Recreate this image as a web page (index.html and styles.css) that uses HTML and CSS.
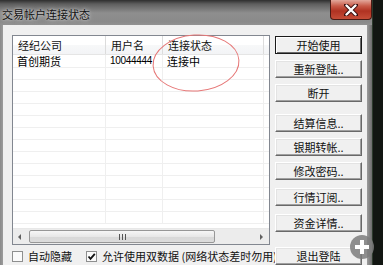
FILE: index.html
```html
<!DOCTYPE html>
<html lang="zh-CN">
<head>
  <meta charset="UTF-8" />
  <title>交易帐户连接状态</title>
  <link rel="stylesheet" href="styles.css">
</head>
<body>

  <div class="window">
    <div class="titlebar">
      <span class="title">交易帐户连接状态</span>
      <div class="close">
        <svg width="14" height="12" viewBox="0 0 14 12">
          <path d="M2 1 L12 11 M12 1 L2 11" stroke="#3a1010" stroke-width="4.2" stroke-linecap="round"/>
          <path d="M2.5 1.5 L11.5 10.5 M11.5 1.5 L2.5 10.5" stroke="#fff" stroke-width="2.4" stroke-linecap="round"/>
        </svg>
      </div>
    </div>

    <div class="client">
      <div class="left">
        <div class="listview">
          <div class="lv-head">
            <div class="cell c1">经纪公司</div>
            <div class="cell c2">用户名</div>
            <div class="cell c3">连接状态</div>
            <div class="cell c4"></div>
          </div>
          <div class="lv-body">
            <div class="row first">
              <div class="cell c1">首创期货</div>
              <div class="cell c2 num">10044444</div>
              <div class="cell c3">连接中</div>
              <div class="cell c4"></div>
            </div>
            <div class="row"><div class="cell c1"></div><div class="cell c2"></div><div class="cell c3"></div><div class="cell c4"></div></div>
            <div class="row"><div class="cell c1"></div><div class="cell c2"></div><div class="cell c3"></div><div class="cell c4"></div></div>
            <div class="row"><div class="cell c1"></div><div class="cell c2"></div><div class="cell c3"></div><div class="cell c4"></div></div>
            <div class="row"><div class="cell c1"></div><div class="cell c2"></div><div class="cell c3"></div><div class="cell c4"></div></div>
            <div class="row"><div class="cell c1"></div><div class="cell c2"></div><div class="cell c3"></div><div class="cell c4"></div></div>
            <div class="row"><div class="cell c1"></div><div class="cell c2"></div><div class="cell c3"></div><div class="cell c4"></div></div>
            <div class="row"><div class="cell c1"></div><div class="cell c2"></div><div class="cell c3"></div><div class="cell c4"></div></div>
            <div class="row"><div class="cell c1"></div><div class="cell c2"></div><div class="cell c3"></div><div class="cell c4"></div></div>
            <div class="row"><div class="cell c1"></div><div class="cell c2"></div><div class="cell c3"></div><div class="cell c4"></div></div>
            <div class="row"><div class="cell c1"></div><div class="cell c2"></div><div class="cell c3"></div><div class="cell c4"></div></div>
            <div class="row"><div class="cell c1"></div><div class="cell c2"></div><div class="cell c3"></div><div class="cell c4"></div></div>
            <div class="row"><div class="cell c1"></div><div class="cell c2"></div><div class="cell c3"></div><div class="cell c4"></div></div>
            <div class="row"><div class="cell c1"></div><div class="cell c2"></div><div class="cell c3"></div><div class="cell c4"></div></div>
          </div>
          <div class="hscroll">
            <div class="arrow arrow-left"></div>
            <div class="thumb"><span class="grip"></span></div>
            <div class="track"></div>
            <div class="arrow arrow-right"></div>
          </div>
        </div>

        <div class="options">
          <label class="check"><span class="box"></span>自动隐藏</label>
          <label class="check"><span class="box checked">
            <svg width="9" height="9" viewBox="0 0 9 9"><path d="M1.5 4.5 L3.5 6.8 L7.8 1.8" fill="none" stroke="#111" stroke-width="1.8"/></svg>
          </span>允许使用双数据 (网络状态差时勿用)</label>
        </div>
      </div>

      <div class="buttons">
        <button class="btn default">开始使用</button>
        <button class="btn">重新登陆..</button>
        <button class="btn">断开</button>
        <button class="btn gap-lg">结算信息..</button>
        <button class="btn">银期转帐..</button>
        <button class="btn">修改密码..</button>
        <button class="btn gap-md">行情订阅..</button>
        <button class="btn gap-md">资金详情..</button>
        <button class="btn gap-xl">退出登陆</button>
      </div>
    </div>
  </div>

  <!-- hand-drawn mark around the status column -->
  <svg class="mark" width="96" height="64" viewBox="0 0 96 64">
    <ellipse cx="48" cy="31" rx="43" ry="28" fill="none" stroke="#e67676" stroke-width="1" transform="rotate(-4 48 31)"/>
  </svg>

  <div class="zoom-plus">
    <svg width="24" height="24" viewBox="0 0 24 24">
      <circle cx="12" cy="12" r="12" fill="#7c7c7c" fill-opacity="0.85"/>
      <path d="M12 5 V19 M5 12 H19" stroke="#fff" stroke-width="4"/>
    </svg>
  </div>

</body>
</html>
```

FILE: styles.css
```css
body {
  margin: 0;
  padding: 0;
  background-color: #121612;
  font-family: "Noto Sans CJK SC", "Liberation Sans", sans-serif;
  font-size: 11px;
  color: #000;
  width: 383px;
  height: 265px;
  overflow: hidden;
  position: relative;
}

.window {
  width: 372px;
  height: 265px;
  background: linear-gradient(90deg, #8a8a8a 0, #9c9c9c 3px, #9c9c9c 367px, #6c6c6c 372px);
  display: flex;
  flex-direction: column;
  border-right: 1px solid #2c3a2c;
}

.titlebar {
  height: 28px;
  display: flex;
  align-items: flex-start;
  background: linear-gradient(180deg, #2e2e2e 0, #5e5e5e 4px, #8e8e8e 13px, #8a8a8a 22px, #9a9a9a 28px);
}

.title {
  margin: 7px 0 0 2px;
  line-height: 14px;
  font-size: 11px;
  color: #111;
  text-shadow: 0 0 5px rgba(220, 220, 220, 0.9), 0 0 2px rgba(220, 220, 220, 0.8);
}

.close {
  margin-left: auto;
  width: 42px;
  height: 20px;
  border: 1px solid #4a1a14;
  border-top: none;
  border-radius: 0 0 4px 4px;
  box-sizing: border-box;
  background: linear-gradient(180deg, #e3a89c 0, #c85a48 6px, #b03222 11px, #c8503a 20px);
  display: flex;
  align-items: center;
  justify-content: center;
}

.client {
  flex: 1;
  margin: 0 5px 0 3px;
  background-color: #f0f0f0;
  padding: 10px 5px 0 9px;
  display: flex;
  gap: 5px;
}

.left {
  width: 258px;
  display: flex;
  flex-direction: column;
}

.listview {
  height: 210px;
  box-sizing: border-box;
  border: 1px solid #828790;
  background: #fff;
  display: flex;
  flex-direction: column;
}

.lv-head {
  height: 19px;
  display: flex;
  background: linear-gradient(180deg, #fff 0, #fff 50%, #f7f8f9 51%, #f3f4f6 100%);
  border-bottom: 1px solid #e5e5e5;
  box-sizing: border-box;
}

.lv-head .cell {
  line-height: 18px;
  padding-left: 5px;
  border-right: 1px solid #dcdcdc;
  color: #111;
}

.cell {
  box-sizing: border-box;
  white-space: nowrap;
}

.c1 { width: 93px; }
.c2 { width: 57px; }
.c3 { width: 101px; }
.c4 { flex: 1; border-right: none !important; }

.lv-body {
  flex: 1;
}

.row {
  display: flex;
  height: 12px;
  border-bottom: 1px solid #efefef;
  box-sizing: border-box;
}

.row.first {
  height: 13px;
}

.row .cell {
  line-height: 12px;
  padding-left: 4px;
  border-right: 1px solid #efefef;
}

.row .c2 {
  padding-right: 8px;
  overflow-x: clip;
}

.num {
  font-family: "Liberation Sans", sans-serif;
  font-size: 10px;
  letter-spacing: -0.3px;
}

.hscroll {
  height: 16px;
  display: flex;
  align-items: center;
  background: #ececec;
  border-top: 1px solid #e8e8e8;
  box-sizing: border-box;
}

.arrow {
  width: 16px;
  height: 15px;
  position: relative;
}

.arrow-left::after,
.arrow-right::after {
  content: "";
  position: absolute;
  top: 5px;
  width: 0;
  height: 0;
  border-top: 3px solid transparent;
  border-bottom: 3px solid transparent;
}

.arrow-left::after {
  left: 5px;
  border-right: 3px solid #606060;
}

.arrow-right::after {
  left: 7px;
  border-left: 3px solid #606060;
}

.thumb {
  width: 186px;
  height: 13px;
  box-sizing: border-box;
  border: 1px solid #979797;
  border-radius: 2px;
  background: linear-gradient(180deg, #f6f6f6 0, #e8e8e8 50%, #d8d8d8 51%, #dcdcdc 100%);
  display: flex;
  align-items: center;
  justify-content: center;
}

.grip {
  width: 7px;
  height: 6px;
  background: repeating-linear-gradient(90deg, #555 0, #555 1px, transparent 1px, transparent 3px);
}

.track {
  flex: 1;
}

.options {
  display: flex;
  align-items: center;
  margin-top: 5px;
  line-height: 13px;
}

.check {
  display: flex;
  align-items: center;
  color: #111;
  white-space: nowrap;
}

.check + .check {
  margin-left: 14px;
}

.box {
  width: 11px;
  height: 11px;
  box-sizing: border-box;
  border: 1px solid #8e8f8f;
  background: #fafafa;
  margin-right: 5px;
  display: flex;
  align-items: center;
  justify-content: center;
}

.buttons {
  width: 87px;
  display: flex;
  flex-direction: column;
  padding-top: 1px;
}

.btn {
  height: 18px;
  width: 87px;
  padding: 0;
  font-family: "Noto Sans CJK SC", "Liberation Sans", sans-serif;
  font-size: 11px;
  line-height: 14px;
  color: #111;
  background: #f0f0f0;
  border: 1px solid;
  border-color: #fff #696969 #696969 #fff;
  box-shadow: inset -1px -1px 0 #a0a0a0, inset 1px 1px 0 #e3e3e3;
  box-sizing: border-box;
}

.btn + .btn {
  margin-top: 6px;
}

.btn.default {
  border: 1px solid #1a1a1a;
  box-shadow: inset 1px 1px 0 #fff, inset -1px -1px 0 #696969;
}

.btn.gap-lg { margin-top: 12px; }
.btn.gap-md { margin-top: 8px; }
.btn.gap-xl { margin-top: 15px; }

.mark {
  position: absolute;
  left: 148px;
  top: 32px;
}

.zoom-plus {
  position: absolute;
  left: 350px;
  top: 235px;
  width: 24px;
  height: 24px;
}
```
